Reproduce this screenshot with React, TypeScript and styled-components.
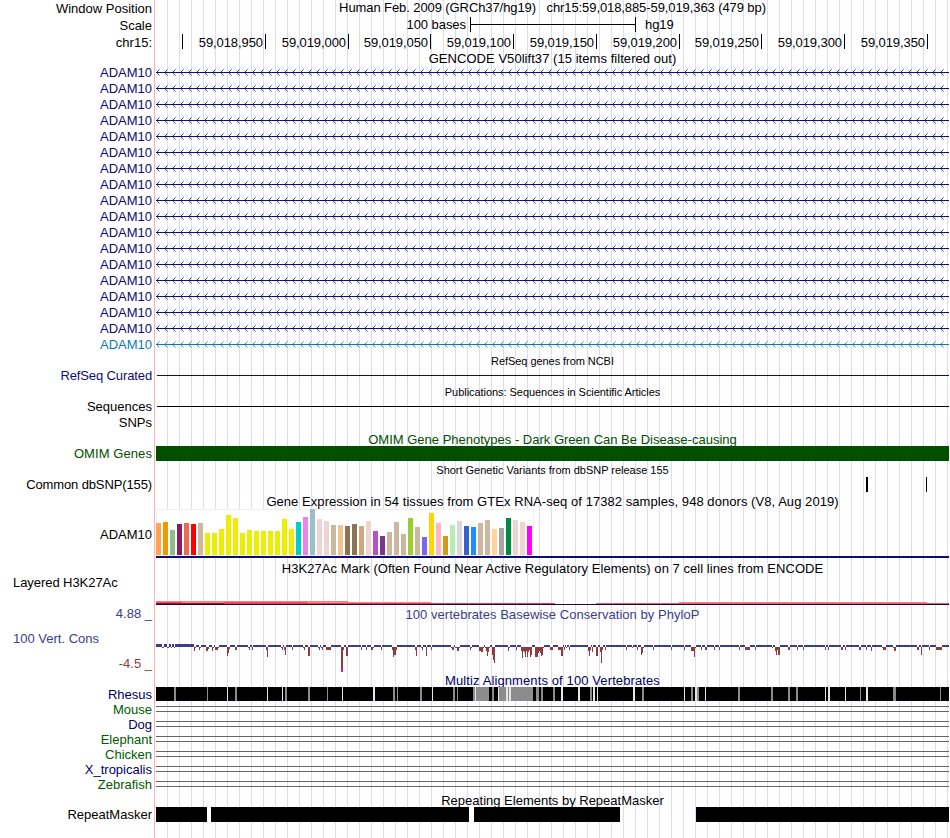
import React from 'react';
import styled, { createGlobalStyle } from 'styled-components';

const GlobalStyle = createGlobalStyle`
    body {
        margin: 0;
        background: #fff;
    }
`

const Browser = styled.main`
    width: 949px;
    height: 838px;
    overflow: hidden;
    font-family: 'Liberation Sans', Arial, Helvetica, sans-serif;
    font-size: 13px;
    line-height: 15px;
    color: #000;
    white-space: pre;
`

const Row = styled.div<{ $height: number }>`
    display: flex;
    height: ${p => p.$height}px;
`

const Side = styled.div`
    display: flex;
    flex-direction: column;
    flex: none;
    box-sizing: border-box;
    width: 155px;
    padding-right: 2px;
    margin-right: 1px;
    border-right: 1px solid #ffb4b4;
`

const Label = styled.span<{ $drop?: number; $color?: string; $left?: boolean; $spacing?: number }>`
    height: 15px;
    margin-top: ${p => p.$drop || 0}px;
    padding-left: 13px;
    text-align: ${p => (p.$left ? 'left' : 'right')};
    color: ${p => p.$color || '#000'};
    letter-spacing: ${p => p.$spacing || 0}px;
`

const Data = styled.div`
    flex: none;
    width: 793px;
    background: linear-gradient(90deg, #dcdcfa 1px, transparent 1px) 11px 0 / 12px 100%;
`

const Title = styled.div<{ $drop?: number; $color?: string; $small?: boolean; $spacing?: number }>`
    padding-top: ${p => p.$drop || 0}px;
    text-align: center;
    color: ${p => p.$color || '#000'};
    font-size: ${p => (p.$small ? 11 : 13)}px;
    line-height: ${p => (p.$small ? 13 : 15)}px;
    letter-spacing: ${p => p.$spacing || 0}px;
`

const Ruler = styled.div`
    display: flex;
`

const RulerCell = styled.div<{ $width: number }>`
    display: flex;
    justify-content: flex-end;
    flex: none;
    box-sizing: border-box;
    width: ${p => p.$width}px;
    height: 15px;
    padding: 1px 2px 0 0;
    border-right: 1px solid #000;
    letter-spacing: -0.08px;
`

const ScaleBar = styled.div`
    display: flex;
    padding-top: 1px;
`

const ScaleText = styled.span<{ $width?: number }>`
    flex: none;
    width: ${p => (p.$width ? `${p.$width}px` : 'auto')};
    text-align: right;
    letter-spacing: -0.05px;
`

const Chart = styled.svg`
    display: block;
    shape-rendering: crispEdges;
`

const NAVY = '#0c0c78';
const GREEN = '#005000';
const PHYLO = '#3c3c8c';
const PHYLO_NEG = '#8c3c3c';
const MULTIZ = '#000064';

// chart coordinates are window x positions, data starts at 156
const X0 = 156;
const WIDTH = 793;

interface TrackChartProps {
    height: number;
    children: React.ReactNode;
}

const TrackChart = ({ height, children }: TrackChartProps) => (
    <Chart width={WIDTH} height={height} viewBox={`${X0} 0 ${WIDTH} ${height}`}>
        {children}
    </Chart>
)

const transcripts = [...Array(17).fill(NAVY), '#0c78b4'];

const arrows = Array.from({ length: 100 }, (_, i) => {
    const x = 156.5 + i * 8;
    return `M${x + 3} 4.5L${x} 7.5L${x + 3} 10.5`;
}).join('');

const ticks: [number, string][] = [
    [182, ''],
    [265, '59,018,950'],
    [348, '59,019,000'],
    [430, '59,019,050'],
    [513, '59,019,100'],
    [596, '59,019,150'],
    [679, '59,019,200'],
    [761, '59,019,250'],
    [844, '59,019,300'],
    [927, '59,019,350'],
];

// [top, colour] for each tissue
const tissues: [number, string][] = [
    [14, '#ffa54f'], [13, '#ee9a00'], [21, '#8fbc8f'], [15, '#8b1c62'], [14, '#ee6a50'],
    [15, '#ff0000'], [14, '#cdb79e'], [24, '#eeee00'], [24, '#eeee00'], [20, '#eeee00'],
    [6, '#eeee00'], [9, '#eeee00'], [24, '#eeee00'], [21, '#eeee00'], [22, '#eeee00'],
    [22, '#eeee00'], [22, '#eeee00'], [22, '#eeee00'], [10, '#eeee00'], [20, '#eeee00'],
    [13, '#00cdcd'], [8, '#ee82ee'], [0, '#9ac0cd'], [10, '#eed5d2'], [12, '#eed5d2'],
    [16, '#cdb79e'], [16, '#eec591'], [17, '#8b7355'], [15, '#8b7355'], [17, '#cdaa7d'],
    [12, '#eed5d2'], [22, '#b452cd'], [27, '#7a378b'], [23, '#cdb79e'], [13, '#cdb79e'],
    [25, '#cdb79e'], [9, '#9acd32'], [18, '#cdb79e'], [28, '#7a67ee'], [4, '#ffd700'],
    [14, '#ffb6c1'], [27, '#cd9b1d'], [16, '#b4eeb4'], [12, '#d9d9d9'], [17, '#3a5fcd'],
    [18, '#1e90ff'], [14, '#cdb79e'], [11, '#cdb79e'], [20, '#ffd39b'], [19, '#a6a6a6'],
    [9, '#008b45'], [11, '#eed5d2'], [13, '#eed5d2'], [17, '#ff00ff'],
];

// [x, y, width, colour]
const h3k27ac: [number, number, number, string][] = [
    [156, 26, 192, '#ff8080'],
    [156, 27, 275, '#ff8080'],
    [156, 27, 26, '#ff4060'],
    [224, 27, 83, '#ff4060'],
    [679, 27, 248, '#ff8080'],
    [156, 28, 399, '#e04060'],
    [156, 28, 68, '#80203c'],
    [596, 28, 353, '#e06070'],
    [156, 29, 793, '#280028'],
];

// negative scores, [x, ...depths]
const dips: number[][] = [
    [162, 1, 1], [167, 1, 1], [171, 1], [174, 1], [194, 4, 1], [199, 3, 1], [206, 4, 4, 2],
    [212, 4, 1], [215, 3, 3, 3, 1], [227, 9, 6, 2], [235, 3, 3], [248, 1, 3], [252, 3],
    [266, 3, 10], [281, 1, 3], [284, 3, 8], [292, 3], [303, 1, 3], [308, 9, 9], [318, 1, 3],
    [321, 1, 3], [326, 3, 3, 3, 3, 3], [341, 23, 23, 3], [346, 9, 9], [361, 3], [366, 3], [371, 3, 3, 1],
    [381, 3], [392, 3, 10, 8, 8, 3], [415, 3, 9], [421, 1, 3], [426, 9], [431, 3], [451, 1, 3, 3],
    [455, 1, 1, 4, 4, 1], [470, 3, 1], [479, 4, 4, 5, 5, 1], [485, 1, 4, 9, 5, 1], [492, 8, 13, 16],
    [508, 4, 1], [516, 3], [521, 4, 11, 4, 5, 10, 4, 10, 5, 3, 10, 8], [535, 10, 10, 10, 6, 4, 6, 9, 8, 1],
    [550, 3, 3, 3], [558, 3, 3, 3, 9, 9], [564, 3], [566, 1], [569, 3], [588, 4, 9, 3], [592, 5],
    [596, 9, 9], [600, 5, 16, 3], [605, 3], [626, 3], [632, 1], [637, 3], [641, 8, 6, 1],
    [653, 3], [671, 3], [684, 3], [691, 4, 4, 4, 10, 1], [701, 3], [705, 3, 3], [714, 3], [719, 3],
    [739, 3], [745, 3, 3, 3, 3, 3], [755, 3], [772, 1], [775, 4, 8, 3, 8, 8], [788, 3, 3], [797, 3],
    [803, 3], [825, 3], [828, 3], [841, 3, 3], [845, 3], [859, 3, 3], [866, 3], [871, 4],
    [882, 1, 3, 3, 3], [893, 1, 4, 4], [917, 3, 3], [921, 8], [929, 3], [936, 3, 3, 3, 3, 3, 3],
];

const GREY = '#8c8c8c';
const PALE = '#e6e6e6';

// [x, width, shade] drawn over the solid Rhesus bar
const rhesus: [number, number, string][] = [
    [174, 2, GREY], [207, 1, GREY], [227, 1, PALE], [235, 2, GREY], [267, 1, PALE], [282, 1, PALE],
    [285, 2, GREY], [308, 2, GREY], [327, 1, GREY], [342, 1, PALE], [373, 2, PALE], [393, 2, GREY],
    [397, 1, GREY], [420, 2, GREY], [432, 1, PALE], [453, 2, GREY], [457, 1, GREY], [473, 2, GREY],
    [475, 1, PALE], [476, 13, GREY], [492, 2, GREY], [498, 1, PALE], [499, 7, GREY], [506, 2, PALE],
    [508, 1, GREY], [509, 2, PALE], [511, 22, GREY], [536, 3, GREY], [541, 2, GREY], [553, 2, GREY],
    [561, 2, PALE], [578, 2, PALE], [590, 2, GREY], [593, 2, PALE], [597, 1, PALE], [633, 2, PALE],
    [642, 2, GREY], [684, 1, PALE], [691, 2, GREY], [695, 2, PALE], [697, 2, GREY], [705, 1, PALE],
    [738, 2, GREY], [771, 2, GREY], [788, 2, GREY], [796, 2, GREY], [825, 1, PALE], [828, 2, PALE],
    [845, 1, PALE], [860, 1, GREY], [866, 2, PALE], [893, 3, GREY], [940, 1, GREY],
];

const species: [string, string][] = [
    ['Mouse', '#005a00'],
    ['Dog', MULTIZ],
    ['Elephant', '#005a00'],
    ['Chicken', '#005a00'],
    ['X_tropicalis', MULTIZ],
    ['Zebrafish', '#005a00'],
];

const repeats = [[156, 51], [211, 258], [474, 146], [696, 253]];

interface TitleRowProps {
    height: number;
    text: string;
    drop?: number;
    color?: string;
    small?: boolean;
    spacing?: number;
    children?: React.ReactNode;
}

const TitleRow = ({ height, text, drop, color, small, spacing, children }: TitleRowProps) => (
    <Row $height={height}>
        <Side>{children}</Side>
        <Data>
            <Title $drop={drop} $color={color} $small={small} $spacing={spacing}>{text}</Title>
        </Data>
    </Row>
)

interface TrackRowProps {
    height: number;
    label: string;
    drop?: number;
    color?: string;
    left?: boolean;
    spacing?: number;
    children?: React.ReactNode;
}

const TrackRow = ({ height, label, drop, color, left, spacing, children }: TrackRowProps) => (
    <Row $height={height}>
        <Side>
            <Label $drop={drop} $color={color} $left={left} $spacing={spacing}>{label}</Label>
        </Side>
        <Data>
            <TrackChart height={height}>{children}</TrackChart>
        </Data>
    </Row>
)

const Header = () => (
    <>
        <TitleRow height={16} spacing={-0.09} text="Human Feb. 2009 (GRCh37/hg19)   chr15:59,018,885-59,019,363 (479 bp)">
            <Label $drop={1}>Window Position</Label>
        </TitleRow>
        <Row $height={18}>
            <Side>
                <Label $drop={2}>Scale</Label>
            </Side>
            <Data>
                <ScaleBar>
                    <ScaleText $width={310}>100 bases</ScaleText>
                    <svg width={179} height={15} viewBox="466 0 179 15" shapeRendering="crispEdges">
                        <path d="M470.5 0V15M635.5 0V15M470 7.5H636" stroke="#000" />
                    </svg>
                    <ScaleText>hg19</ScaleText>
                </ScaleBar>
            </Data>
        </Row>
        <Row $height={17}>
            <Side>
                <Label $drop={1}>chr15:</Label>
            </Side>
            <Data>
                <Ruler>
                    {ticks.map(([x, text], i) => (
                        <RulerCell key={x} $width={x - (i ? ticks[i - 1][0] : X0 - 1)}>{text}</RulerCell>
                    ))}
                </Ruler>
            </Data>
        </Row>
    </>
)

const Genes = () => (
    <>
        <TitleRow height={14} spacing={0.05} text="GENCODE V50lift37 (15 items filtered out)" />
        {transcripts.map((color, i) => (
            <TrackRow key={i} height={16} label="ADAM10" color={color}>
                <path d="M156 7.5H949" stroke={color} />
                <path d={arrows} stroke={color} fill="none" strokeWidth={0.8} shapeRendering="auto" />
            </TrackRow>
        ))}
        <TitleRow height={15} drop={2} small spacing={-0.06} text="RefSeq genes from NCBI" />
        <TrackRow height={16} label="RefSeq Curated" color={NAVY} spacing={-0.12}>
            <path d="M157 7.5H949" stroke={NAVY} />
        </TrackRow>
        <TitleRow height={15} drop={2} small spacing={-0.05} text="Publications: Sequences in Scientific Articles" />
        <TrackRow height={16} label="Sequences">
            <path d="M157 7.5H949" stroke="#000" />
        </TrackRow>
        <TrackRow height={16} label="SNPs" />
    </>
)

const Variants = () => (
    <>
        <TitleRow height={15} drop={1} color={GREEN} text="OMIM Gene Phenotypes - Dark Green Can Be Disease-causing" />
        <TrackRow height={16} label="OMIM Genes" color={GREEN} spacing={0.08}>
            <rect x={156} y={0} width={793} height={15} fill={GREEN} />
        </TrackRow>
        <TitleRow height={15} drop={2} small spacing={-0.02} text="Short Genetic Variants from dbSNP release 155" />
        <TrackRow height={16} label="Common dbSNP(155)" spacing={-0.12}>
            <rect x={866} y={0} width={2} height={15} />
            <rect x={926} y={0} width={1} height={15} />
        </TrackRow>
    </>
)

const Expression = () => (
    <>
        <TitleRow height={16} drop={1} spacing={0.055} text="Gene Expression in 54 tissues from GTEx RNA-seq of 17382 samples, 948 donors (V8, Aug 2019)" />
        <TrackRow height={50} drop={18} label="ADAM10">
            <rect x={156.5} y={0.5} width={377} height={46} fill="#fff" stroke="#eee" />
            {tissues.map(([top, color], i) => (
                <rect key={i} x={156 + i * 7} y={top} width={5} height={46 - top} fill={color} />
            ))}
            <rect x={156} y={47} width={793} height={2} fill={NAVY} />
        </TrackRow>
    </>
)

const Regulation = () => (
    <>
        <TitleRow height={16} drop={2} spacing={0.045} text="H3K27Ac Mark (Often Found Near Active Regulatory Elements) on 7 cell lines from ENCODE" />
        <TrackRow height={31} label="Layered H3K27Ac" left spacing={-0.06}>
            {h3k27ac.map(([x, y, width, color], i) => (
                <rect key={i} x={x} y={y} width={width} height={1} fill={color} />
            ))}
        </TrackRow>
    </>
)

const Conservation = () => (
    <>
        <TitleRow height={16} drop={1} color={PHYLO} spacing={0.04} text="100 vertebrates Basewise Conservation by PhyloP">
            <Label $color={PHYLO}>4.88 _</Label>
        </TitleRow>
        <Row $height={51}>
            <Side>
                <Label $drop={9} $color={PHYLO} $left>100 Vert. Cons</Label>
                <Label $drop={10} $color={PHYLO_NEG}>-4.5 _</Label>
            </Side>
            <Data>
                <TrackChart height={51}>
                    <rect x={156} y={23} width={793} height={2} fill={PHYLO} />
                    <rect x={156} y={22} width={38} height={2} fill={PHYLO} />
                    {dips.map(([x, ...depths]) => (
                        <g key={x}>
                            <rect x={x} y={22} width={depths.length} height={3} fill="#fff" />
                            {depths.map((depth, i) => (
                                <rect key={i} x={x + i} y={25} width={1} height={depth} fill={PHYLO_NEG} />
                            ))}
                        </g>
                    ))}
                    <rect x={341} y={48} width={2} height={2} fill="#f0f" />
                </TrackChart>
            </Data>
        </Row>
        <TitleRow height={14} color={MULTIZ} spacing={0.11} text="Multiz Alignments of 100 Vertebrates" />
        <TrackRow height={15} label="Rhesus" color={MULTIZ}>
            <rect x={156} y={0} width={793} height={14} />
            {rhesus.map(([x, width, shade]) => (
                <rect key={x} x={x} y={0} width={width} height={14} fill={shade} />
            ))}
        </TrackRow>
        {species.map(([name, color]) => (
            <TrackRow key={name} height={15} label={name} color={color}>
                <path d="M156 4.5H949M156 9.5H949" stroke="#666" />
            </TrackRow>
        ))}
    </>
)

const Repeats = () => (
    <>
        <TitleRow height={15} drop={1} text="Repeating Elements by RepeatMasker" />
        <TrackRow height={31} label="RepeatMasker">
            {repeats.map(([x, width]) => (
                <rect key={x} x={x} y={0} width={width} height={15} />
            ))}
        </TrackRow>
    </>
)

const App = () => (
    <>
        <GlobalStyle />
        <Browser>
            <Header />
            <Genes />
            <Variants />
            <Expression />
            <Regulation />
            <Conservation />
            <Repeats />
        </Browser>
    </>
)

export default App;
